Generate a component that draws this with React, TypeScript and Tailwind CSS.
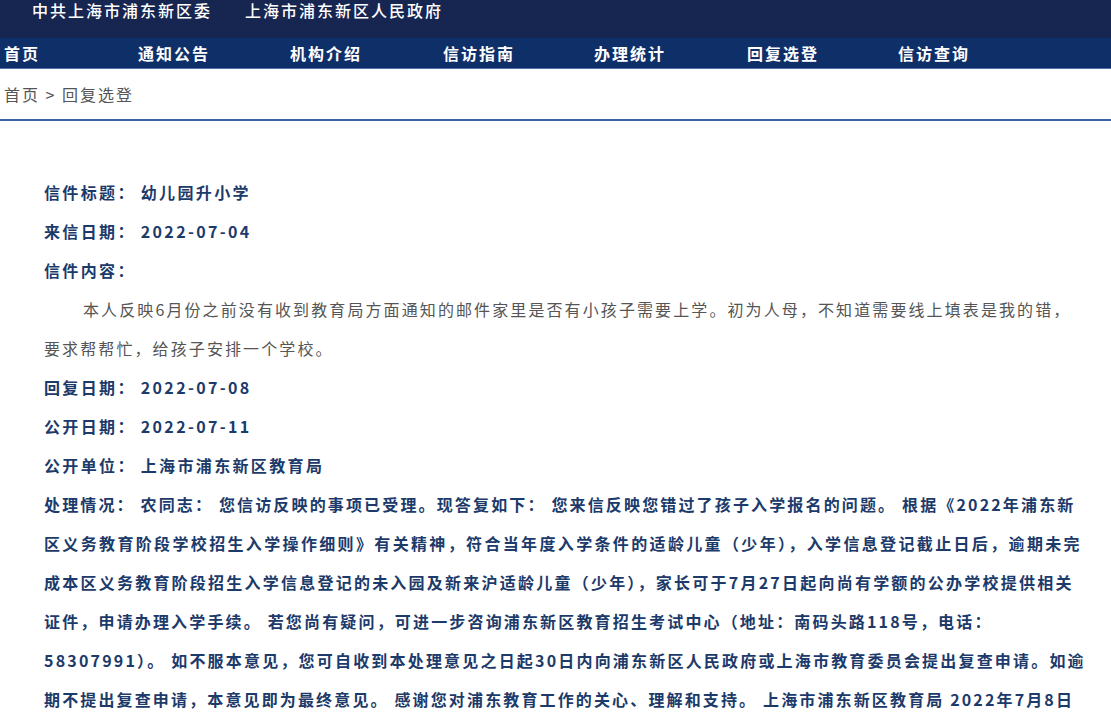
import React from 'react';

const navItems = [
  { label: '首页', width: 'w-[134px]' },
  { label: '通知公告', width: 'w-[152px]' },
  { label: '机构介绍', width: 'w-[153px]' },
  { label: '信访指南', width: 'w-[151px]' },
  { label: '办理统计', width: 'w-[153px]' },
  { label: '回复选登', width: 'w-[151px]' },
  { label: '信访查询', width: 'w-[152px]' },
];

const Field: React.FC<{ label: string; value?: string }> = ({ label, value }) => (
  <div className="whitespace-nowrap">
    <span>{label}：</span>
    {value && <span className="ml-[5px]">{value}</span>}
  </div>
);

// each line carries its own tracking so the right edges land where the original wraps
const replyLines = [
  { text: '处理情况： 农同志： 您信访反映的事项已受理。现答复如下： 您来信反映您错过了孩子入学报名的问题。 根据《2022年浦东新', cls: 'tracking-[2.15px]' },
  { text: '区义务教育阶段学校招生入学操作细则》有关精神，符合当年度入学条件的适龄儿童（少年），入学信息登记截止日后，逾期未完', cls: 'tracking-[2.35px]' },
  { text: '成本区义务教育阶段招生入学信息登记的未入园及新来沪适龄儿童（少年），家长可于7月27日起向尚有学额的公办学校提供相关', cls: 'tracking-[2.23px]' },
  { text: '证件，申请办理入学手续。 若您尚有疑问，可进一步咨询浦东新区教育招生考试中心（地址：南码头路118号，电话：', cls: 'tracking-[2.16px]' },
  { text: '58307991）。 如不服本意见，您可自收到本处理意见之日起30日内向浦东新区人民政府或上海市教育委员会提出复查申请。如逾', cls: 'tracking-[2.19px]' },
  { text: '期不提出复查申请，本意见即为最终意见。 感谢您对浦东教育工作的关心、理解和支持。 上海市浦东新区教育局 2022年7月8日', cls: 'tracking-[2.14px]' },
];

export default function App() {
  return (
    <div className="w-[1111px] h-[719px] overflow-hidden bg-white font-['Noto_Sans_CJK_SC','Noto_Sans',sans-serif] text-[16px] tracking-[2px]">
      {/* top header */}
      <div className="h-[38px] bg-[#172551] flex gap-[33px] pl-[32px] pt-px text-white leading-[18px] font-medium">
        <span>中共上海市浦东新区委</span>
        <span>上海市浦东新区人民政府</span>
      </div>

      {/* nav */}
      <div className="h-[31px] bg-[#0f2f68] border-b border-[#4f70a6] flex items-center pl-[4px] text-white font-semibold">
        {navItems.map(item => (
          <div key={item.label} className={`${item.width} shrink-0`}>{item.label}</div>
        ))}
      </div>

      {/* breadcrumb */}
      <div className="h-[52px] flex items-center pl-[4px] text-[#555555] border-b-2 border-[#3a62a0]">
        首页 &gt; 回复选登
      </div>

      {/* content */}
      <div className="pl-[44px] pt-[52px] leading-[39px] text-[#1c3a6a] font-semibold tracking-[2.35px]">
        <Field label="信件标题" value="幼儿园升小学" />
        <Field label="来信日期" value="2022-07-04" />
        <Field label="信件内容" />
        <div className="text-[#555555] font-normal whitespace-nowrap">
          <div className="pl-[39px] tracking-[2.1px]">本人反映6月份之前没有收到教育局方面通知的邮件家里是否有小孩子需要上学。初为人母，不知道需要线上填表是我的错，</div>
          <div className="tracking-[2.1px]">要求帮帮忙，给孩子安排一个学校。</div>
        </div>
        <Field label="回复日期" value="2022-07-08" />
        <Field label="公开日期" value="2022-07-11" />
        <Field label="公开单位" value="上海市浦东新区教育局" />
        <div className="whitespace-nowrap">
          {replyLines.map((line, i) => (
            <div key={i} className={line.cls}>{line.text}</div>
          ))}
        </div>
      </div>
    </div>
  );
}
